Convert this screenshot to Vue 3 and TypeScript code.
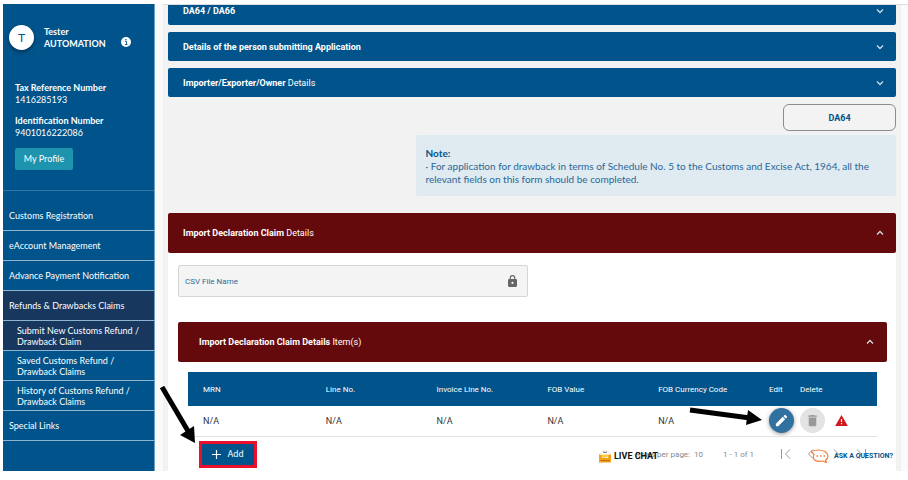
<script setup lang="ts">
import { ref } from 'vue'

interface NavItem {
  label: string
  kind: 'main' | 'sub'
  active?: boolean
}

const navItems: NavItem[] = [
  { label: 'Customs Registration', kind: 'main' },
  { label: 'eAccount Management', kind: 'main' },
  { label: 'Advance Payment Notification', kind: 'main' },
  { label: 'Refunds & Drawbacks Claims', kind: 'main', active: true },
  { label: 'Submit New Customs Refund / Drawback Claim', kind: 'sub', active: true },
  { label: 'Saved Customs Refund / Drawback Claims', kind: 'sub' },
  { label: 'History of Customs Refund / Drawback Claims', kind: 'sub' },
  { label: 'Special Links', kind: 'main' },
]

const sections = [
  { strong: 'DA64 / DA66', rest: '' },
  { strong: 'Details of the person submitting Application', rest: '' },
  { strong: 'Importer/Exporter/Owner', rest: 'Details' },
]

const columns = ['MRN', 'Line No.', 'Invoice Line No.', 'FOB Value', 'FOB Currency Code']
const rows = [['N/A', 'N/A', 'N/A', 'N/A', 'N/A']]

const pagerIcons = [
  { name: 'First page', path: 'M2.500 2v10M11 2.500L6.500 7l4.500 4.500' },
  { name: 'Previous page', path: 'M9 2.500L4.500 7 9 11.500' },
  { name: 'Next page', path: 'M5 2.500L9.500 7 5 11.500' },
  { name: 'Last page', path: 'M3 2.500L7.500 7 3 11.500M11.500 2v10' },
]

const csvFile = ref('')
</script>

<template>
  <div class="page">
    <aside class="sidebar">
      <div class="user">
        <span class="avatar">T</span>
        <div class="user-name">Tester<br />AUTOMATION</div>
        <svg class="info" viewBox="0 0 10 10" aria-hidden="true">
          <circle cx="5" cy="5" r="5" fill="#fff" />
          <path d="M4.200 4.500h1.300v3M4 7.500h2.400" stroke="#00548b" stroke-width=".9" fill="none" />
          <circle cx="5" cy="2.700" r=".8" fill="#00548b" />
        </svg>
      </div>
      <dl class="ids">
        <dt>Tax Reference Number</dt>
        <dd>1416285193</dd>
        <dt>Identification Number</dt>
        <dd>9401016222086</dd>
      </dl>
      <button class="profile" type="button">My Profile</button>
      <nav class="nav">
        <a
          v-for="item in navItems"
          :key="item.label"
          href="#"
          class="nav-item"
          :class="[item.kind, { active: item.active }]"
          >{{ item.label }}</a
        >
      </nav>
    </aside>

    <main class="content">
      <button v-for="s in sections" :key="s.strong" type="button" class="bar">
        <span><b>{{ s.strong }}</b> {{ s.rest }}</span>
        <svg class="chevron" viewBox="0 0 8 8" aria-hidden="true"><path d="M1 2.5l3 3 3-3" /></svg>
      </button>

      <button type="button" class="form-type">DA64</button>

      <section class="note">
        <b>Note:</b>
        <p>
          · For application for drawback in terms of Schedule No. 5 to the Customs and Excise Act, 1964, all the
          relevant fields on this form should be completed.
        </p>
      </section>

      <section class="claim">
        <button type="button" class="bar red">
          <span><b>Import Declaration Claim</b> Details</span>
          <svg class="chevron" viewBox="0 0 8 8" aria-hidden="true"><path d="M1 5.5l3-3 3 3" /></svg>
        </button>
        <div class="claim-body">
          <div class="field">
            <label for="csv">CSV File Name</label>
            <input id="csv" v-model="csvFile" type="text" readonly />
            <svg class="lock" viewBox="0 0 16 21" aria-hidden="true">
              <path
                fill="#666"
                fill-rule="evenodd"
                d="M14 7h-1V5A5 5 0 0 0 3 5v2H2a2 2 0 0 0-2 2v10a2 2 0 0 0 2 2h12a2 2 0 0 0 2-2V9a2 2 0 0 0-2-2zM5 5a3 3 0 0 1 6 0v2H5zM8 16a2 2 0 1 1 0-4 2 2 0 0 1 0 4z"
              />
            </svg>
          </div>

          <button type="button" class="bar red inner">
            <span><b>Import Declaration Claim Details</b> Item(s)</span>
            <svg class="chevron" viewBox="0 0 8 8" aria-hidden="true"><path d="M1 5.5l3-3 3 3" /></svg>
          </button>

          <div class="items">
            <table>
              <colgroup>
                <col class="c-first" />
                <col v-for="n in 4" :key="n" />
                <col class="c-edit" />
                <col class="c-delete" />
                <col class="c-warn" />
              </colgroup>
              <thead>
                <tr>
                  <th v-for="c in columns" :key="c">{{ c }}</th>
                  <th>Edit</th>
                  <th>Delete</th>
                  <th></th>
                </tr>
              </thead>
              <tbody>
                <tr v-for="(row, r) in rows" :key="r">
                  <td v-for="(cell, i) in row" :key="i">{{ cell }}</td>
                  <td>
                    <button type="button" class="round edit" aria-label="Edit">
                      <svg viewBox="0 0 24 24" fill="#fff">
                        <path
                          d="M3 17.25V21h3.75L17.81 9.94l-3.75-3.75L3 17.25zM20.71 7.04a1 1 0 0 0 0-1.41l-2.34-2.34a1 1 0 0 0-1.41 0l-1.83 1.83 3.75 3.75 1.83-1.83z"
                        />
                      </svg>
                    </button>
                  </td>
                  <td>
                    <button type="button" class="round delete" aria-label="Delete">
                      <svg viewBox="0 0 24 24" fill="#999">
                        <path d="M6 19a2 2 0 0 0 2 2h8a2 2 0 0 0 2-2V7H6v12zM19 4h-3.5l-1-1h-5l-1 1H5v2h14V4z" />
                      </svg>
                    </button>
                  </td>
                  <td>
                    <svg class="warn" viewBox="0 0 22 19" aria-hidden="true">
                      <path fill="#cf1820" d="M0 19h22L11 0z" />
                      <path fill="#fff" d="M10 7h2v5h-2zM10 14h2v2h-2z" />
                    </svg>
                  </td>
                </tr>
              </tbody>
            </table>

            <div class="table-foot">
              <div class="highlight">
                <button type="button" class="add">
                  <svg viewBox="0 0 10 10" aria-hidden="true"><path d="M5 0v10M0 5h10" stroke="#fff" stroke-width="1.300" /></svg>
                  Add
                </button>
              </div>
              <div class="pager">
                <span class="per-page">Rows per page: &nbsp;10</span>
                <span class="range">1 - 1 of 1</span>
                <button v-for="p in pagerIcons" :key="p.name" type="button" class="page-btn" :aria-label="p.name">
                  <svg viewBox="0 0 14 14"><path :d="p.path" /></svg>
                </button>
              </div>
            </div>
          </div>
        </div>
      </section>
    </main>

    <a href="#" class="chat">
      <svg viewBox="0 0 13 14" aria-hidden="true">
        <path d="M1 5Q6.500-3 12 5" fill="#fff" stroke="#ddd" stroke-width=".7" />
        <path d="M4.500 3h4" stroke="#555" />
        <path d="M0 5l3 1h7l3-1v9H0z" fill="#f6a01a" />
        <path d="M3 5.500h7v3H3z" fill="#ffc83d" />
        <path d="M3 8.500h1M5 8.500h1M7 8.500h3" stroke="#fff" />
        <path d="M2 12h9" stroke="#a65b00" stroke-dasharray="2 .5" />
      </svg>
      LIVE CHAT
    </a>
    <a href="#" class="ask">
      <svg viewBox="0 0 19 14" fill="none" stroke="#f47b35" stroke-width="1.200" aria-hidden="true">
        <path d="M1 2.500Q9-.5 15 2.500q3 2 3 4.500t-2.500 4l1 2.500-3.500-1.500Q7 13 3.500 10.500" />
        <path d="M1 2.500l3 3Q2.500 8 4 10" />
        <path d="M6.500 7H8M10 7h1.500M13.500 7H15" stroke-width="1.500" />
      </svg>
      ASK A QUESTION?
    </a>

    <svg class="arrow arrow-add" viewBox="0 0 36 58" aria-hidden="true">
      <path d="M2 1L28 45" stroke="#000" stroke-width="5" />
      <path d="M35 57L20 49l14-9z" />
    </svg>
    <svg class="arrow arrow-edit" viewBox="0 0 74 20" aria-hidden="true">
      <path d="M1 4L61 12" stroke="#000" stroke-width="5" />
      <path d="M73 14L57 19l2-15z" />
    </svg>
  </div>
</template>

<style>
body {
  margin: 0;
  background: #fff;
}
</style>

<style scoped>
* {
  box-sizing: border-box;
}
button {
  font: inherit;
  border: 0;
  padding: 0;
  margin: 0;
  cursor: pointer;
}
a {
  color: inherit;
  text-decoration: none;
}
.page {
  position: relative;
  display: flex;
  min-height: 100vh;
  padding: 4px 0 9px 3px;
  font-family: Roboto, 'Liberation Sans', sans-serif;
  font-size: 9px;
}
.sidebar {
  width: 152px;
  flex: none;
  background: #00548b;
  border-right: 1px solid #6e9fc0;
  color: #fff;
  font-family: Lato, 'Open Sans', sans-serif;
  line-height: 12px;
}
.user {
  display: flex;
  align-items: center;
  padding: 21px 0 0 6px;
}
.avatar {
  width: 25px;
  height: 25px;
  border-radius: 50%;
  background: #fff;
  color: #00548b;
  font-size: 12px;
  line-height: 25px;
  text-align: center;
  box-shadow: 0 2px 4px rgba(0, 0, 0, 0.4);
}
.user-name {
  width: 61px;
  margin-left: 10px;
  font-weight: 700;
}
.info {
  width: 10px;
  height: 10px;
  margin: 8px 0 0 16px;
}
.ids {
  margin: 32px 0 0 12px;
}
.ids dt {
  font-weight: 700;
}
.ids dd {
  margin: 0 0 9px;
}
.profile {
  display: block;
  width: 58px;
  height: 22px;
  margin-left: 12px;
  border-radius: 2px;
  background: #1e93ae;
  color: #fff;
}
.nav {
  margin-top: 20px;
  padding-top: 10px;
  border-top: 1px solid #2f76a4;
}
.nav-item {
  display: flex;
  align-items: center;
  height: 30px;
  padding-left: 6px;
  border-bottom: 1px solid #8db5cf;
}
.nav-item.sub {
  padding: 0 12px 0 14px;
  line-height: 11px;
}
.nav-item.active {
  background: #17375f;
}
.content {
  flex: 1;
  min-width: 0;
  display: flex;
  flex-direction: column;
  overflow: hidden;
  padding: 0 12px 0 5px;
  margin-left: 8px;
  background: linear-gradient(to left, #fafafa 7px, #f2f2f2 7px);
  box-shadow: -8px 0 #fafafa;
  border-top: 1px solid #ddd;
}
.bar {
  display: flex;
  flex: none;
  align-items: center;
  justify-content: space-between;
  width: 100%;
  height: 29px;
  margin-bottom: 7px;
  padding: 0 12px 0 15px;
  border-radius: 2px;
  background: #00548b;
  color: #fff;
  text-align: left;
}
.bar:first-child {
  margin-top: -9px;
}
.chevron {
  width: 8px;
  height: 8px;
  fill: none;
  stroke: #cfdde8;
  stroke-width: 1.3;
}
.form-type {
  align-self: flex-end;
  width: 113px;
  height: 27px;
  border: 1px solid #8c8c8c;
  border-radius: 6px;
  background: #f3f3f3;
  color: #00548b;
  font-weight: 700;
}
.note {
  align-self: flex-end;
  width: 66%;
  margin-top: 4px;
  padding: 12px 10px 10px;
  background: #dfeaf1;
  border-radius: 2px;
  color: #2a6796;
  font-family: Lato, 'Open Sans', sans-serif;
  font-size: 10px;
  line-height: 13px;
}
.note b {
  color: #00548b;
}
.note p {
  margin: 0;
}
.claim {
  flex: 1;
  margin-top: 17px;
  background: #fff;
}
.bar.red {
  height: 40px;
  margin: 0;
  background: #650a0c;
}
.claim-body {
  padding: 12px 9px 0 10px;
}
.field {
  display: flex;
  align-items: center;
  width: 350px;
  height: 32px;
  padding: 0 10px 0 6px;
  border: 1px solid #d6d6d6;
  border-radius: 2px;
  background: #f4f4f4;
}
.field label {
  color: #2b6d9b;
  font-size: 8px;
}
.field input {
  flex: 1;
  min-width: 0;
  border: 0;
  background: none;
}
.lock {
  width: 9px;
  height: 12px;
}
.bar.red.inner {
  margin: 25px 0 10px;
  padding: 0 13px 0 21px;
}
.items {
  margin: 0 10px;
}
table {
  width: 100%;
  table-layout: fixed;
  border-collapse: collapse;
  text-align: left;
}
.c-first {
  width: 20%;
}
.c-edit {
  width: 31px;
}
.c-delete {
  width: 35px;
}
.c-warn {
  width: 42px;
}
th,
td {
  padding: 0;
}
th:first-child,
td:first-child {
  padding-left: 15px;
}
th {
  height: 34px;
  background: #00548b;
  color: #fff;
  font-size: 8px;
  font-weight: 400;
}
td {
  height: 30px;
  border-bottom: 1px solid #e2e2e2;
  color: #333;
}
.round {
  display: flex;
  align-items: center;
  justify-content: center;
  width: 25px;
  height: 25px;
  border-radius: 50%;
}
.round svg {
  width: 15px;
  height: 15px;
}
.edit {
  background: #31719f;
  box-shadow: 0 1px 4px rgba(0, 0, 0, 0.4);
}
.delete {
  background: #e3e3e3;
}
.warn {
  display: block;
  width: 13px;
  height: 11px;
}
.table-foot {
  display: flex;
  align-items: flex-start;
  justify-content: space-between;
  padding: 4px 9px 0 11px;
}
.highlight {
  padding: 3px;
  background: #e8102a;
}
.add {
  display: flex;
  align-items: center;
  justify-content: center;
  gap: 6px;
  width: 52px;
  height: 21px;
  background: #00548b;
  color: #fff;
}
.add svg {
  width: 9px;
  height: 9px;
}
.pager {
  display: flex;
  align-items: center;
  height: 27px;
  color: #888;
  font-size: 8px;
}
.range {
  margin: 0 25px 0 20px;
}
.page-btn {
  width: 14px;
  height: 14px;
  margin-right: 11px;
  background: none;
}
.page-btn:last-child {
  margin-right: 0;
}
.page-btn svg {
  display: block;
  fill: none;
  stroke: #999;
}
.chat,
.ask {
  position: absolute;
  bottom: 17px;
  display: flex;
  align-items: center;
  font-weight: 700;
}
.chat {
  left: 599px;
  gap: 3px;
  color: #111;
}
.chat svg {
  width: 12px;
  height: 14px;
}
.ask {
  right: 15px;
  gap: 5px;
  color: #00548b;
  font-size: 7px;
}
.ask svg {
  width: 19px;
  height: 14px;
}
.arrow {
  position: absolute;
  pointer-events: none;
}
.arrow-add {
  left: 160px;
  top: 386px;
  width: 36px;
  height: 58px;
}
.arrow-edit {
  left: 689px;
  top: 406px;
  width: 74px;
  height: 20px;
}
</style>
